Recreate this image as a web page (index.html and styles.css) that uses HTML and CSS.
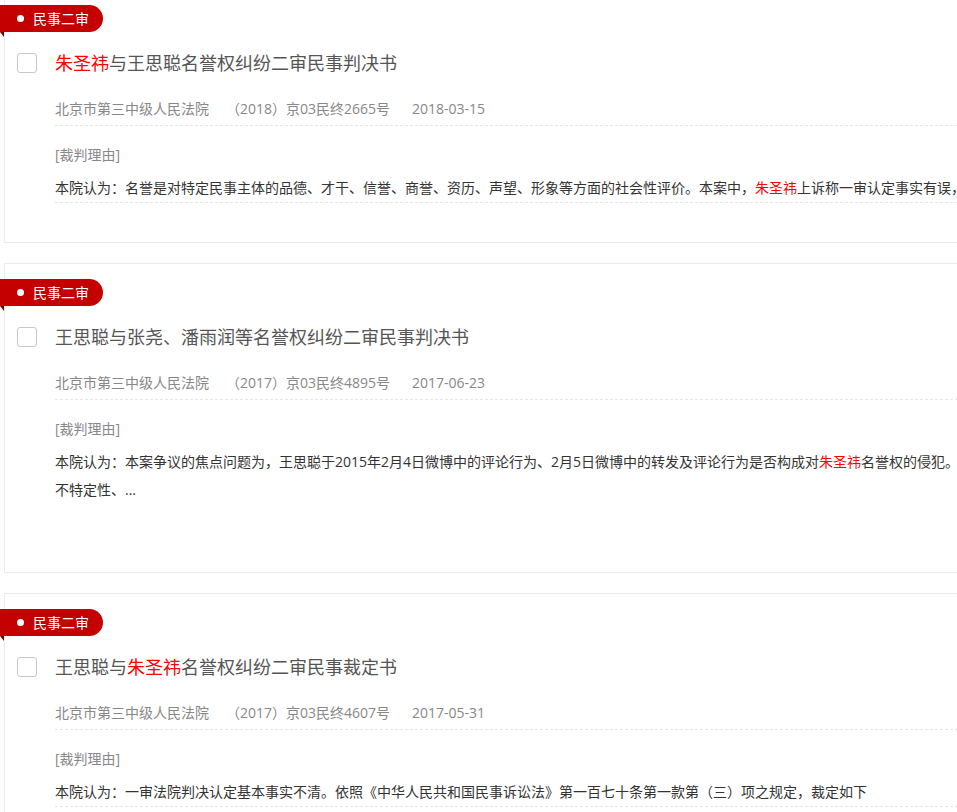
FILE: index.html
```html
<!DOCTYPE html>
<html lang="zh-CN">
<head>
<meta charset="utf-8">
<title>裁判文书列表</title>
<link rel="stylesheet" href="styles.css">
</head>
<body>
<div class="list">
  <div class="card">
    <div class="tag"><span class="dot"></span>民事二审</div>
    <div class="title-row">
      <span class="checkbox"></span>
      <h3 class="title"><em>朱圣祎</em>与王思聪名誉权纠纷二审民事判决书</h3>
    </div>
    <div class="meta"><span class="court">北京市第三中级人民法院</span><span class="case-no">（2018）京03民终2665号</span><span class="date">2018-03-15</span></div>
    <div class="reason-label">[裁判理由]</div>
    <div class="reason single">本院认为：名誉是对特定民事主体的品德、才干、信誉、商誉、资历、声望、形象等方面的社会性评价。本案中，<em>朱圣祎</em>上诉称一审认定事实有误，认为王思聪的言论构成侵权</div>
  </div>

  <div class="card">
    <div class="tag"><span class="dot"></span>民事二审</div>
    <div class="title-row">
      <span class="checkbox"></span>
      <h3 class="title">王思聪与张尧、潘雨润等名誉权纠纷二审民事判决书</h3>
    </div>
    <div class="meta"><span class="court">北京市第三中级人民法院</span><span class="case-no">（2017）京03民终4895号</span><span class="date">2017-06-23</span></div>
    <div class="reason-label">[裁判理由]</div>
    <div class="reason multi"><div class="line">本院认为：本案争议的焦点问题为，王思聪于2015年2月4日微博中的评论行为、2月5日微博中的转发及评论行为是否构成对<em>朱圣祎</em>名誉权的侵犯。微博具有</div><div class="line">不特定性、...</div></div>
  </div>

  <div class="card">
    <div class="tag"><span class="dot"></span>民事二审</div>
    <div class="title-row">
      <span class="checkbox"></span>
      <h3 class="title">王思聪与<em>朱圣祎</em>名誉权纠纷二审民事裁定书</h3>
    </div>
    <div class="meta"><span class="court">北京市第三中级人民法院</span><span class="case-no">（2017）京03民终4607号</span><span class="date">2017-05-31</span></div>
    <div class="reason-label">[裁判理由]</div>
    <div class="reason single">本院认为：一审法院判决认定基本事实不清。依照《中华人民共和国民事诉讼法》第一百七十条第一款第（三）项之规定，裁定如下</div>
  </div>
</div>
</body>
</html>
```
FILE: styles.css
```css
html, body {
  margin: 0;
  padding: 0;
  background: #fff;
  overflow: hidden;
}

body {
  font-family: "Open Sans", "Noto Sans CJK SC", sans-serif;
  color: #333;
}

.list {
  margin-top: -11px;
  padding-left: 4px;
  width: 1100px;
}

.card {
  border: 1px solid #ebebeb;
  padding: 15px 0 39px 12px;
  margin-bottom: 20px;
  background: #fff;
}

em {
  font-style: normal;
  color: #ff0000;
}

.tag {
  position: relative;
  display: flex;
  align-items: center;
  width: 103px;
  height: 27px;
  margin-left: -17px;
  box-sizing: border-box;
  padding-left: 17px;
  background: #c50000;
  color: #fff;
  font-size: 14px;
  line-height: 27px;
  border-radius: 0 14px 14px 0;
}

.tag::after {
  content: "";
  position: absolute;
  left: 0;
  top: 27px;
  border-top: 5px solid #7d0000;
  border-left: 4px solid transparent;
}

.dot {
  width: 7px;
  height: 7px;
  border-radius: 50%;
  background: #fff;
  margin-right: 9px;
}

.title-row {
  display: flex;
  align-items: center;
  margin-top: 16px;
  height: 30px;
}

.checkbox {
  width: 18px;
  height: 18px;
  border: 1px solid #c8c8c8;
  border-radius: 3px;
  margin-right: 18px;
  flex: none;
}

.title {
  margin: 0;
  font-size: 18px;
  font-weight: normal;
  line-height: 30px;
  color: #555;
  white-space: nowrap;
}

.meta,
.reason-label,
.reason {
  margin-left: 38px;
}

.meta {
  margin-top: 15px;
  display: flex;
  font-size: 14px;
  line-height: 32px;
  height: 32px;
  color: #888;
  border-bottom: 1px dashed #e6e6e6;
  white-space: nowrap;
}

.court {
  margin-right: 17px;
}

.case-no {
  margin-right: 22px;
}

.reason-label {
  margin-top: 15px;
  font-size: 14px;
  line-height: 28px;
  color: #888;
}

.reason {
  margin-top: 5px;
  font-size: 14px;
  line-height: 28px;
  color: #333;
  white-space: nowrap;
  overflow: hidden;
}

.reason.single {
  height: 28px;
  border-bottom: 1px dashed #e6e6e6;
}

.reason.multi {
  height: 84px;
  border-bottom: 1px solid transparent;
}
```
